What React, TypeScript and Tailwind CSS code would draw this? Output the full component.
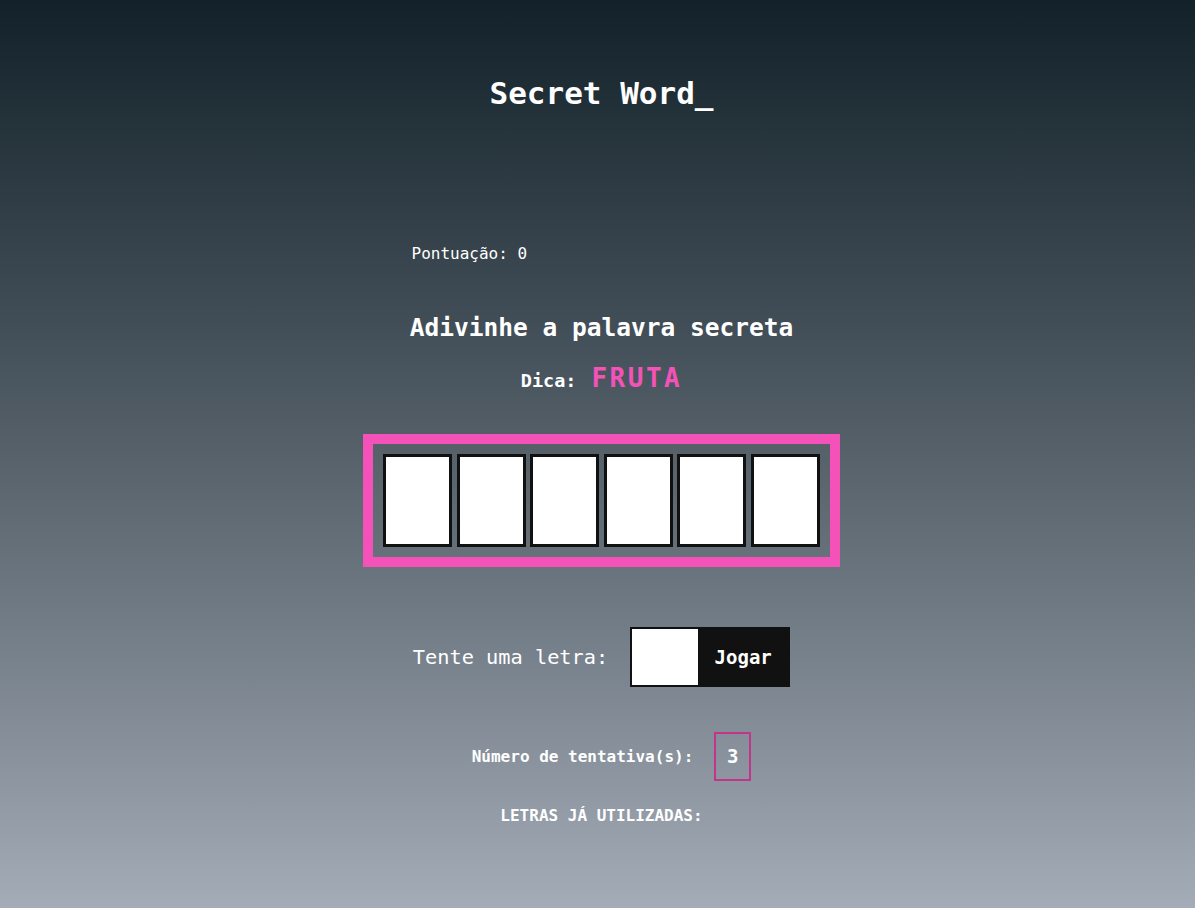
import React, { useState } from 'react';

const mono = "font-['DejaVu_Sans_Mono','Liberation_Mono',monospace]";

export default function App() {
  const [letter, setLetter] = useState('');
  const slots = ['', '', '', '', '', ''];

  return (
    <div
      className={`min-h-[908px] w-full pl-[8px] flex flex-col items-center text-white bg-gradient-to-b from-[#13222a] via-[#56616a] to-[#a4acb7] ${mono}`}
    >
      {/* Title */}
      <h1 className="mt-[75px] text-[31px] leading-[37px] font-bold">Secret Word_</h1>

      {/* Score */}
      <div className="w-[380px] mt-[130px] text-[16px] leading-[24px]">Pontuação: 0</div>

      {/* Game */}
      <h2 className="mt-[46px] text-[24.5px] leading-[32px] font-bold">Adivinhe a palavra secreta</h2>
      <p className="mt-[18px] flex items-baseline gap-[15px] leading-[32px]">
        <span className="text-[18.5px] font-bold">Dica:</span>
        <span className="text-[26px] font-bold tracking-[2.5px] text-[#f452b8]">FRUTA</span>
      </p>

      <div className="mt-[37px] border-[10px] border-[#f452b8] p-[10px] flex gap-[4.6px]">
        {slots.map((s, i) => (
          <div key={i} className="w-[69px] h-[93px] bg-white border-[3px] border-[#111]">
            {s}
          </div>
        ))}
      </div>

      {/* Letter form */}
      <div className="mt-[60px] flex items-center gap-[22px]">
        <p className="text-[20.3px] leading-[28px]">Tente uma letra:</p>
        <form
          className="flex h-[60px] border-2 border-[#111]"
          onSubmit={(e) => e.preventDefault()}
        >
          <input
            type="text"
            maxLength={1}
            value={letter}
            onChange={(e) => setLetter(e.target.value)}
            className="w-[66px] h-full bg-white text-black text-center outline-none"
          />
          <button className="w-[90px] h-full bg-[#111] text-white text-[19px] font-bold">Jogar</button>
        </form>
      </div>

      <div className="mt-[45px] ml-[20px] flex items-center gap-[21px]">
        <p className="text-[16px] font-bold">Número de tentativa(s):</p>
        <span className="w-[37px] h-[49px] border-2 border-[#c3348b] flex items-center justify-center text-[19px] font-bold">
          3
        </span>
      </div>

      <p className="mt-[23px] text-[16px] leading-[24px] font-bold">LETRAS JÁ UTILIZADAS:</p>
    </div>
  );
}
